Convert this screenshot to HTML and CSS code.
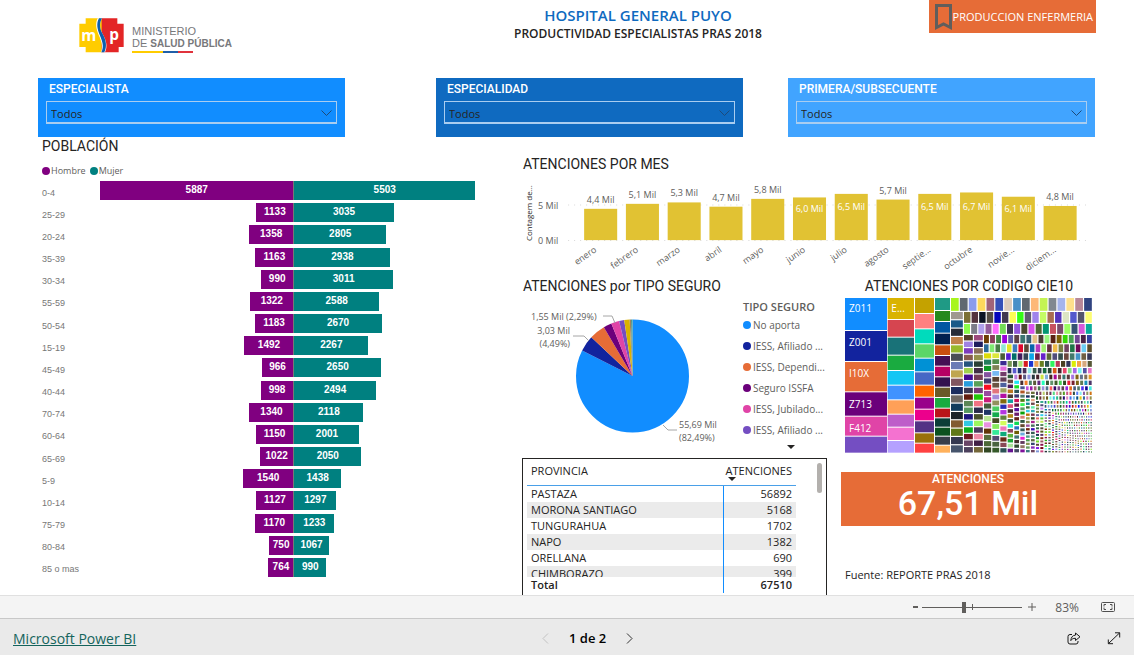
FILE: index.html
```html
<!DOCTYPE html>
<html lang="es">
<head>
<meta charset="utf-8">
<title>Hospital General Puyo - Productividad</title>
<link rel="stylesheet" href="styles.css">
</head>
<body>
<main class="report">
  <header class="top">
    <div class="logo">
      <svg width="45" height="35" viewBox="0 0 135 105" aria-hidden="true">
        <path d="M20 1h50v102H20V87H1V71h0V34h0V17h19z" fill="#fc0"/>
        <path d="M68 1h47v16h19v70h-15v16H68z" fill="#e32526"/>
        <path d="M56 1h13c-9 15-7 31 2 47 10 18 16 36 7 55H66c6-18 2-33-6-50C52 35 48 17 56 1z" fill="#fff"/>
        <path d="M60 1h9c-9 15-7 31 2 47 10 18 14 36 5 55h-9c9-18 3-33-4-50C55 35 51 17 60 1z" fill="#0b5fae"/>
        <text x="7" y="68" class="logo-letter">m</text>
        <text x="91" y="66" class="logo-letter">p</text>
      </svg>
      <div class="ministry">
        <div>MINISTERIO</div>
        <div>DE <b>SALUD PÚBLICA</b></div>
        <div class="flag"><i></i><i></i><i></i></div>
      </div>
    </div>
    <div class="heading">
      <h1>HOSPITAL GENERAL PUYO</h1>
      <h2>PRODUCTIVIDAD ESPECIALISTAS PRAS 2018</h2>
    </div>
    <button class="bookmark" type="button">
      <svg width="17" height="26" viewBox="0 0 17 26" aria-hidden="true"><path d="M1.500 1.500h14v22l-7-3.500-7 3.500z" fill="none" stroke="#605e5c" stroke-width="3"/></svg>
      <span>PRODUCCION ENFERMERIA</span>
    </button>
  </header>

  <section class="slicers">
    <div class="slicer s1">
      <label for="f1">ESPECIALISTA</label>
      <div class="pick"><select id="f1"><option>Todos</option></select><svg width="11" height="7" viewBox="0 0 11 7"><path d="M.5.5l5 5 5-5"/></svg></div>
    </div>
    <div class="slicer s2">
      <label for="f2">ESPECIALIDAD</label>
      <div class="pick"><select id="f2"><option>Todos</option></select><svg width="11" height="7" viewBox="0 0 11 7"><path d="M.5.5l5 5 5-5"/></svg></div>
    </div>
    <div class="slicer s3">
      <label for="f3">PRIMERA/SUBSECUENTE</label>
      <div class="pick"><select id="f3"><option>Todos</option></select><svg width="11" height="7" viewBox="0 0 11 7"><path d="M.5.5l5 5 5-5"/></svg></div>
    </div>
  </section>

  <div class="visuals">
    <section class="population">
      <h3>POBLACIÓN</h3>
      <div class="keys"><span class="key male">Hombre</span><span class="key female">Mujer</span></div>
      <div class="pyramid" id="pyramid"></div>
    </section>

    <div class="right">
      <section class="months">
        <h3>ATENCIONES POR MES</h3>
        <svg id="months" viewBox="0 0 572 106" role="img" aria-label="Atenciones por mes"></svg>
      </section>

      <section class="insurance">
        <h3>ATENCIONES por TIPO SEGURO</h3>
        <div class="pie-row">
          <svg class="pie" width="212" height="160" viewBox="0 0 212 160" role="img" aria-label="Atenciones por tipo de seguro">
            <g id="slices" transform="translate(109.500 82) rotate(-90)"></g>
            <g class="leader">
              <path d="M80 22h9l3 7"/><path d="M50 42h11l5 5"/><path d="M140 131l5 5h9"/>
            </g>
            <g class="pie-label">
              <text x="8" y="26">1,55 Mil (2,29%)</text>
              <text x="47" y="40" text-anchor="end">3,03 Mil</text>
              <text x="47" y="53" text-anchor="end">(4,49%)</text>
              <text x="156" y="134">55,69 Mil</text>
              <text x="156" y="147">(82,49%)</text>
            </g>
          </svg>
          <div class="legend">
            <h4>TIPO SEGURO</h4>
            <ul>
              <li class="c1">No aporta</li>
              <li class="c2">IESS, Afiliado ...</li>
              <li class="c3">IESS, Dependi...</li>
              <li class="c4">Seguro ISSFA</li>
              <li class="c5">IESS, Jubilado...</li>
              <li class="c6">IESS, Afiliado ...</li>
            </ul>
            <div class="more"><svg width="8" height="4" viewBox="0 0 8 4"><path d="M0 0h8L4 4z" fill="#252423"/></svg></div>
          </div>
        </div>
      </section>

      <section class="codes">
        <h3>ATENCIONES POR CODIGO CIE10</h3>
        <svg id="treemap" viewBox="0 0 744 465" role="img" aria-label="Atenciones por código CIE10"></svg>
      </section>

      <section class="province">
        <table>
          <thead>
            <tr><th>PROVINCIA</th><th class="num">ATENCIONES<svg class="sort" width="8" height="4" viewBox="0 0 8 4"><path d="M0 0h8L4 4z" fill="#252423"/></svg></th></tr>
          </thead>
          <tbody>
            <tr><td>PASTAZA</td><td class="num">56892</td></tr>
            <tr><td>MORONA SANTIAGO</td><td class="num">5168</td></tr>
            <tr><td>TUNGURAHUA</td><td class="num">1702</td></tr>
            <tr><td>NAPO</td><td class="num">1382</td></tr>
            <tr><td>ORELLANA</td><td class="num">690</td></tr>
            <tr class="cut"><td><div>CHIMBORAZO</div></td><td class="num"><div>399</div></td></tr>
          </tbody>
          <tfoot>
            <tr><td>Total</td><td class="num">67510</td></tr>
          </tfoot>
        </table>
        <div class="scroll"></div>
      </section>

      <section class="summary">
        <div class="card">
          <div class="card-title">ATENCIONES</div>
          <div class="card-value">67,51 Mil</div>
        </div>
        <p>Fuente: REPORTE PRAS 2018</p>
      </section>
    </div>
  </div>
</main>

<div class="zoombar">
  <button type="button" class="minus" aria-label="Alejar"><svg width="5" height="2" viewBox="0 0 5 2"><path d="M0 1h5" stroke="#605e5c" stroke-width="2"/></svg></button>
  <input type="range" min="0" max="100" value="41" aria-label="Zoom">
  <button type="button" class="plus" aria-label="Acercar"><svg width="8" height="8" viewBox="0 0 8 8"><path d="M0 4h8M4 0v8" stroke="#605e5c"/></svg></button>
  <span class="percent">83%</span>
  <button type="button" aria-label="Ajustar a la página"><svg width="14" height="10" viewBox="0 0 14 10" fill="none" stroke="#505050"><rect x=".5" y=".5" width="13" height="9" rx="1"/><path d="M3 4.500V2.500h2M9 2.500h2v2M11 5.500v2H9M5 7.500H3v-2"/></svg></button>
</div>

<footer class="footer">
  <a href="#">Microsoft Power BI</a>
  <nav class="pager">
    <button type="button" aria-label="Anterior"><svg width="7" height="11" viewBox="0 0 7 11"><path d="M6 .5l-5 5 5 5" fill="none" stroke="#c2c2c2"/></svg></button>
    <b>1 de 2</b>
    <button type="button" aria-label="Siguiente"><svg width="7" height="11" viewBox="0 0 7 11"><path d="M1 .5l5 5-5 5" fill="none" stroke="#333"/></svg></button>
  </nav>
  <div class="actions">
    <button type="button" aria-label="Compartir"><svg width="14" height="13" viewBox="0 0 14 13" fill="none" stroke="#1a1a1a" stroke-linejoin="round"><path d="M5 2.500H3a2 2 0 0 0-2 2V10a2 2 0 0 0 2 2h6a2 2 0 0 0 2-2V9"/><path d="M8.500 1l4.500 3.800L8.500 8.500v-2.200C6 6.300 4.800 7 3.800 8.600 4 5.500 5.500 3.300 8.500 3.100z"/></svg></button>
    <button type="button" aria-label="Pantalla completa"><svg width="14" height="13" viewBox="0 0 14 13" fill="none" stroke="#1a1a1a"><path d="M1.500 11.500L12.500 1M8 .8h4.700V5.500M1.300 7.500v4.200H6"/></svg></button>
  </div>
</footer>
<script src="charts.js"></script>
</body>
</html>
```
FILE: styles.css
```css
* { box-sizing: border-box; }
body {
  margin: 0;
  height: 100vh;
  display: flex;
  flex-direction: column;
  background: #fff;
  color: #252423;
  font-family: "Open Sans", "Noto Sans", sans-serif;
  font-size: 11px;
}
h1, h2, h3, h4, p, ul { margin: 0; padding: 0; }
button { border: 0; padding: 0; background: none; font: inherit; color: inherit; display: flex; align-items: center; }
svg { display: block; }

.report { flex: 1; min-height: 0; overflow: hidden; padding: 0 38px; }

.top { display: grid; grid-template-columns: 385fr 430fr 243fr; height: 78px; align-items: start; }
.logo { display: flex; gap: 8px; padding: 18px 0 0 41px; }
.logo-letter { font: bold 46px "Open Sans", sans-serif; fill: #fff; }
.ministry { padding-top: 7px; font: 12px/12px "Liberation Sans", sans-serif; color: #77787b; white-space: nowrap; }
.ministry div { font-size: 11px; }
.ministry b { font-size: 10px; }
.flag { display: flex; width: 61px; height: 2px; margin-top: 1px; }
.flag i { flex: 1; background: #1f5fa8; }
.flag i:first-child { flex: 2; background: #fc0; }
.flag i:last-child { background: #e0323c; }
.heading { text-align: center; padding-top: 6px; white-space: nowrap; }
h1 { font-size: 15px; line-height: 19px; font-weight: 600; color: #0f6ac0; }
h2 { font-size: 12px; line-height: 18px; font-weight: 600; }
.bookmark { justify-self: end; height: 33px; padding: 0 3px 0 6px; gap: 1px; background: #e66c37; color: #fff; font-size: 11px; white-space: nowrap; }

.slicers { display: grid; grid-template-columns: 307fr 91fr 307fr 45fr 307fr; margin-right: 1px; }
.slicer { height: 59px; padding: 0 8px; color: #fff; }
.s1 { background: #118dff; }
.s2 { background: #0f6ac0; grid-column: 3; }
.s3 { background: #41a4ff; grid-column: 5; }
.slicer label { display: block; padding-left: 3px; font: 500 12px/23px Roboto, sans-serif; }
.pick { position: relative; }
.pick select { display: block; width: 100%; height: 23px; padding: 2px 4px 0; appearance: none; border: 1px solid #a9cdf0; border-bottom-width: 2px; border-radius: 0; background: transparent; font: inherit; color: #252423; }
.pick svg { position: absolute; right: 5px; top: 9px; fill: none; stroke: #1d4a7a; pointer-events: none; }

.visuals { display: grid; grid-template-columns: 485fr 573fr; padding-top: 1px; }
h3 { font: 400 14px/16px Roboto, sans-serif; white-space: nowrap; }
.population { padding: 0 48px 0 4px; }
.keys { display: flex; gap: 4px; margin-top: 8px; font-size: 9px; line-height: 18px; color: #605e5c; }
.key { display: flex; align-items: center; gap: 1px; }
.key::before { content: ""; width: 8px; height: 8px; border-radius: 50%; background: #800080; }
.key.female::before { background: #008080; }
.pyramid { display: grid; grid-auto-rows: 1fr; height: 399px; margin-top: 1px; font-family: "Liberation Sans", sans-serif; }
.age { display: grid; grid-template-columns: 58px 194fr 182fr; align-items: center; padding-bottom: 3px; }
.age span { padding-top: 4px; font-size: 9px; color: #777; }
.bar { height: 19px; font-size: 10px; line-height: 18px; font-weight: bold; color: #fff; text-align: center; }
.bar.male { background: #800080; justify-self: end; }
.bar.female { background: #008080; border-left: 1px solid #777; }

.right { display: grid; grid-template-columns: 318fr 255fr; align-content: start; padding-top: 18px; }
.months { grid-column: 1 / 3; height: 122px; }
.months svg { width: 100%; }
.axis { fill: #605e5c; font-size: 9px; }
.inside { fill: #fff; font-size: 9px; }
.grid { stroke: #d8d8d8; stroke-dasharray: 1 5; }
.y-title { fill: #252423; font-size: 8px; }

.insurance, .codes { height: 180px; }
.pie-row { display: flex; gap: 8px; }
.leader path { fill: none; stroke: #a6a6a6; }
.pie-label { font-size: 9px; fill: #605e5c; }
.legend { width: 88px; color: #605e5c; white-space: nowrap; }
h4 { padding-top: 4px; font-size: 11px; line-height: 18px; font-weight: 600; }
.legend ul { list-style: none; margin-top: -2px; }
.legend li { display: flex; align-items: center; gap: 2px; height: 21px; font-size: 10px; }
.legend li::before { content: ""; flex: none; width: 8px; height: 8px; border-radius: 50%; background: var(--c); }
.c1 { --c: #118dff; } .c2 { --c: #12239e; } .c3 { --c: #e66c37; }
.c4 { --c: #6b007b; } .c5 { --c: #e044a7; } .c6 { --c: #744ec2; }
.more { display: flex; justify-content: center; padding: 5px 0 0 8px; }

.codes { padding: 0 3px 0 4px; }
.codes h3 { text-align: center; margin-bottom: 4px; }
.codes svg { width: 100%; }
.tree-label { fill: #fff; font-size: 30px; }

.province { display: flex; justify-content: space-between; height: 150px; margin: 0 14px 0 -1px; padding: 4px 4px 0; border: 1px solid #252423; border-width: 1px 1px 0; }
table { width: 269px; height: 130px; table-layout: fixed; border-collapse: collapse; line-height: 16px; }
th { height: 22px; padding: 0 4px; text-align: left; vertical-align: top; font-weight: 400; border-bottom: 1px solid #4aa0e8; }
td { height: 16px; padding: 0 4px; }
.num { width: 73px; padding: 0 4px 0 1px; text-align: right; }
.sort { margin: -2px 0 0 4px; }
td.num { border-left: 1px solid #118dff; }
tbody tr:nth-child(even) { background: #ebebeb; }
.cut td { height: 11px; }
.cut div { height: 11px; overflow: hidden; }
tfoot { font-weight: 600; }
.scroll { width: 5px; height: 30px; border-radius: 3px; background: #b3b0ad; }

.summary { padding-top: 14px; }
.card { height: 54px; margin-right: 1px; background: #e66c37; color: #fff; text-align: center; font-family: Roboto, sans-serif; }
.card-title { font-size: 12px; line-height: 14px; font-weight: 500; }
.card-value { font-size: 34px; line-height: 34px; font-weight: 500; }
.summary p { padding: 40px 0 0 4px; line-height: 18px; }

.zoombar { display: flex; align-items: center; justify-content: flex-end; height: 23px; padding-right: 19px; border-top: 1px solid #e0e0e0; background: #f4f4f4; }
.zoombar .minus { margin-right: 4px; }
.zoombar .plus { margin: 0 19px 0 6px; }
.percent { margin-right: 22px; font-size: 12px; color: #605e5c; }
input[type="range"] { appearance: none; width: 100px; height: 12px; margin: 0; background: linear-gradient(#605e5c, #605e5c) 50px 3px / 1px 6px no-repeat, linear-gradient(#605e5c, #605e5c) 0 6px / 100% 1px no-repeat; }
input[type="range"]::-webkit-slider-thumb { appearance: none; width: 4px; height: 11px; background: #605e5c; }

.footer { display: grid; grid-template-columns: 1fr 134px 1fr; align-items: center; height: 37px; padding: 2px 13px 0; border-top: 1px solid #c8c8c8; background: #eaeaea; }
.footer a { color: #14645c; font-size: 14px; }
.pager { display: flex; align-items: center; gap: 20px; padding-left: 42px; }
.pager b { font-size: 13px; font-weight: 600; color: #000; white-space: nowrap; }
.actions { display: flex; justify-content: flex-end; gap: 26px; }
```
FILE: charts.js
```js
const NS = "http://www.w3.org/2000/svg";
function add(parent, tag, attrs, text) {
  const el = document.createElementNS(NS, tag);
  for (const k in attrs) el.setAttribute(k, attrs[k]);
  if (text) el.textContent = text;
  parent.appendChild(el);
  return el;
}

// Population pyramid
const ages = [["0-4",5887,5503],["25-29",1133,3035],["20-24",1358,2805],["35-39",1163,2938],["30-34",990,3011],["55-59",1322,2588],["50-54",1183,2670],["15-19",1492,2267],["45-49",966,2650],["40-44",998,2494],["70-74",1340,2118],["60-64",1150,2001],["65-69",1022,2050],["5-9",1540,1438],["10-14",1127,1297],["75-79",1170,1233],["80-84",750,1067],["85 o mas",764,990]];
document.getElementById("pyramid").innerHTML = ages.map(([age, m, f]) =>
  `<div class="age"><span>${age}</span><div class="bar male" style="width:${m / 58.87}%">${m}</div><div class="bar female" style="width:${f / 55.03}%">${f}</div></div>`).join("");

// Monthly columns
const chart = document.getElementById("months");
const months = [["enero",4.4],["febrero",5.1],["marzo",5.3],["abril",4.7],["mayo",5.8],["junio",6.0],["julio",6.5],["agosto",5.7],["septie...",6.5],["octubre",6.7],["novie...",6.1],["diciem...",4.8]];
add(chart, "line", { x1: 45, x2: 566, y1: 33, y2: 33, class: "grid" });
add(chart, "line", { x1: 45, x2: 566, y1: 68.5, y2: 68.5, class: "grid" });
add(chart, "text", { x: 15, y: 37, class: "axis" }, "5 Mil");
add(chart, "text", { x: 15, y: 72, class: "axis" }, "0 Mil");
add(chart, "text", { transform: "translate(9 69) rotate(-90)", class: "y-title" }, "Contagem de...");
months.forEach(([name, v], i) => {
  const x = 61 + i * 41.7, h = v * 7.1, inside = v >= 6;
  add(chart, "rect", { x, y: 68 - h, width: 33, height: h, fill: "#e1c233" });
  add(chart, "text", { x: x + 16.5, y: inside ? (v > 6.2 ? 38 : 40) : 62 - h, "text-anchor": "middle", class: inside ? "inside" : "axis" }, v.toFixed(1).replace(".", ",") + " Mil");
  add(chart, "text", { transform: `translate(${x + 13} 79) rotate(-35)`, "text-anchor": "end", class: "axis" }, name);
});

// Insurance pie: colour and closing angle of each slice
let from = 0;
[["#118dff",297],["#12239e",313.2],["#e66c37",329.5],["#6b007b",338],["#e044a7",346.2],["#744ec2",351.5],["#d9b300",357],["#a08060",358.4],["#4f9a8c",360]].forEach(([color, to]) => {
  add(document.getElementById("slices"), "circle", { r: 28.25, fill: "none", stroke: color, "stroke-width": 56.5, pathLength: 360, "stroke-dasharray": `${to - from} 360`, "stroke-dashoffset": -from });
  from = to;
});

// Treemap
const tree = document.getElementById("treemap");
function cell(x, y, w, h, fill) { add(tree, "rect", { x, y, width: w, height: h, fill }); }
const columns = [
  [0, 126, [0,99,192,283,356,416,467], ["#118dff","#12239e","#e66c37","#6b007b","#e044a7","#744ec2"]],
  [128, 79, [0,66,119,173,219,263,307,350,389,429,467], ["#d9b300","#d64550","#197278","#1aab40","#15c6f4","#4092ff","#ffa058","#be5dc9","#f472d0","#b5a1ff"]],
  [210, 57, [0,48,94,139,182,223,263,299,335,370,406,437,467], ["#c4a200","#ff8080","#00dbbc","#5bd667","#0091d5","#4668c5","#ff6300","#99008a","#ec008c","#533285","#99700a","#ff4141"]],
  [270, 45, [0,39,72,107,142,174,206,238,269,300,332,361,389,416,443,467], ["#1f9a85","#25891c","#0057a2","#002050","#c94f0f","#450f54","#b60064","#34124f","#6a5a29","#1aab40","#ba141a","#0c3d37","#0b511f","#373d49","#ffb15b"]]
];
columns.forEach(([x, w, cuts, fills]) => fills.forEach((f, i) => cell(x, cuts[i], w, cuts[i + 1] - cuts[i] - 3, f)));
[["Z011",43],["Z001",145],["I10X",236],["Z713",330],["F412",401]].forEach(([t, y]) => add(tree, "text", { x: 12, y, class: "tree-label" }, t));
add(tree, "text", { x: 139, y: 43, class: "tree-label" }, "E...");

let seed = 41;
const rnd = () => (seed = (seed * 16807) % 2147483647) / 2147483647;
const tint = () => {
  const r = rnd();
  const s = r < .45 ? 18 + rnd() * 20 : 50 + rnd() * 50;
  const l = r < .45 ? 20 + rnd() * 30 : 20 + rnd() * 55;
  return `hsl(${Math.round(rnd() * 360)} ${Math.round(s)}% ${Math.round(l)}%)`;
};
const known = ["#a8f51c","#606870","#8a9cec","#fdd95c","#a06478","#3450b8","#dcccbc","#4890c8","#606870","#fdb878","#c4f454","#808890","#a4b4ec","#fde08c","#b88898","#304480","#a09890",
  "#195a88","#272d37","#c0824a","#98b92c","#4a4e55","#6a7bb5","#bfa650","#80565f","#1b2d5e","#6e6862","#123c5c","#1c2329","#825a32","#607818","#343850","#46546c","#7c7034","#54343e",
  "#0c1424","#544c44","#0404bc","#403850","#fdfd54","#34fc14","#605c70","#a084ec","#c4fc64","#a86c50","#5434bc","#dce4c4","#5458cc","#54546c","#fdfd74","#8cfc4c","#7c7c88","#b0a0ec"];
const sizes = [42,39,36,33,30,30,28,27,25,24,23,22,21,20,20,18,18,17,17,16,15,15,14,14,13,13,12,12,11,11,11,10,10,10,9,9,9];
let left = 318, topY = 0, n = 0, step = 0;
while (left < 741 && topY < 462) {
  const w = 744 - left, h = 467 - topY;
  const t = step < sizes.length ? sizes[step] : 8;
  const row = w < h, len = row ? w : h;
  const count = Math.max(1, Math.round(len / Math.max(7, t * (t > 26 ? .65 : .74))));
  const each = len / count, gap = t > 20 ? 3.5 : 4;
  for (let i = 0; i < count; i++) {
    const fill = known[n++] || tint();
    if (row) cell(left + i * each, topY, each - gap, t - gap, fill);
    else cell(left, topY + i * each, t - gap, each - gap, fill);
  }
  if (row) topY += t; else left += t;
  step++;
}
```
